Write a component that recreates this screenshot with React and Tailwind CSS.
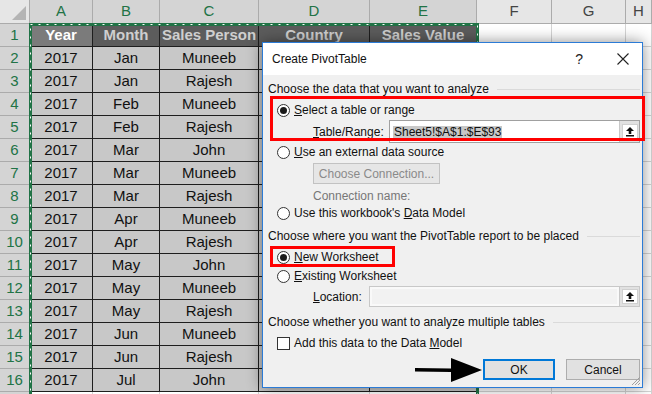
import React from "react";

const data = [
  ["Jan", "Muneeb"], ["Jan", "Rajesh"], ["Feb", "Muneeb"], ["Feb", "Rajesh"],
  ["Mar", "John"], ["Mar", "Muneeb"], ["Mar", "Rajesh"], ["Apr", "Muneeb"],
  ["Apr", "Rajesh"], ["May", "John"], ["May", "Muneeb"], ["May", "Rajesh"],
  ["Jun", "Muneeb"], ["Jun", "Rajesh"], ["Jul", "John"],
];

const colLetters = ["A", "B", "C", "D", "E", "F", "G", "H"];

function RowHead({ n, sel = true }) {
  return (
    <div className={`flex items-center justify-center border-r border-b border-[#ababab] text-[15px] ${sel ? "bg-[#d4d4d4] text-[#217346]" : "bg-[#e6e6e6] text-[#444]"}`}>
      {n}
    </div>
  );
}

function DataCell({ children }) {
  return (
    <div className="flex items-center justify-center bg-[#c8c8c8] border-r border-b border-[#1e1e1e] text-[15px] text-[#111]">
      {children}
    </div>
  );
}

function Blank() {
  return <div className="bg-white border-r border-b border-[#d4d4d4]" />;
}

function Radio({ on }) {
  return (
    <span className="w-[13px] h-[13px] rounded-full border border-[#333] bg-white flex items-center justify-center shrink-0">
      {on && <span className="w-[7px] h-[7px] rounded-full bg-[#1a1a1a]" />}
    </span>
  );
}

function CollapseBtn() {
  return (
    <div className="w-[20px] h-full flex items-center justify-center bg-[#e1e1e1] border-l border-[#c8c8c8]">
      <div className="w-[16px] h-[15px] bg-white border border-[#d0d0d0] flex items-center justify-center">
        <svg width="10" height="11" viewBox="0 0 10 11">
          <path d="M5 1 L9 5 L6.3 5 L6.3 8 L3.7 8 L3.7 5 L1 5 Z" fill="#111" />
          <rect x="1" y="9" width="8" height="1.5" fill="#111" />
        </svg>
      </div>
    </div>
  );
}

function SectionLabel({ children, className = "" }) {
  return (
    <div className={`flex items-center h-[16px] ${className}`}>
      <span className="whitespace-nowrap">{children}</span>
      <div className="flex-1 h-px bg-[#dadada] ml-[8px]" />
    </div>
  );
}

export default function App() {
  return (
    <div className="relative w-[652px] h-[394px] overflow-hidden bg-white" style={{ fontFamily: '"Liberation Sans", Arial, sans-serif' }}>
      {/* Spreadsheet */}
      <div className="grid grid-cols-[30px_63px_67px_99px_111px_107px_75px_74px_26px] grid-rows-[24px_repeat(17,23px)]">
        {/* corner */}
        <div className="relative bg-[#e6e6e6] border-r border-b border-[#ababab]">
          <div className="absolute right-[3px] bottom-[3px] w-0 h-0 border-l-[14px] border-l-transparent border-b-[14px] border-b-[#b4b4b4]" />
        </div>
        {colLetters.map((c, i) => (
          <div
            key={c}
            className={`flex items-center justify-center border-r border-b border-[#ababab] text-[15px] ${i < 5 ? "bg-[#d4d4d4] text-[#217346]" : "bg-[#e6e6e6] text-[#444]"}`}
          >
            {c}
          </div>
        ))}

        {/* Row 1 */}
        <RowHead n={1} />
        <div className="flex items-center justify-center bg-[#7b7b7b] border-r border-b border-[#1e1e1e] text-[15px] font-bold text-white">Year</div>
        <div className="flex items-center justify-center bg-[#5c5c5c] border-r border-b border-[#1e1e1e] text-[15px] font-bold text-[#cfcfcf]">Month</div>
        <div className="flex items-center justify-center bg-[#5c5c5c] border-r border-b border-[#1e1e1e] text-[15px] font-bold text-[#cfcfcf]">Sales Person</div>
        <div className="flex items-center justify-center bg-[#5c5c5c] border-r border-b border-[#1e1e1e] text-[15px] font-bold text-[#cfcfcf]">Country</div>
        <div className="flex items-center justify-center bg-[#5c5c5c] border-r border-b border-[#1e1e1e] text-[15px] font-bold text-[#cfcfcf]">Sales Value</div>
        <Blank />
        <Blank />
        <Blank />

        {data.map(([m, p], i) => (
          <React.Fragment key={i}>
            <RowHead n={i + 2} />
            <DataCell>2017</DataCell>
            <DataCell>{m}</DataCell>
            <DataCell>{p}</DataCell>
            <DataCell />
            <DataCell />
            <Blank />
            <Blank />
            <Blank />
          </React.Fragment>
        ))}
        <div className="bg-[#d4d4d4] border-r border-b border-[#ababab]" />
        <Blank /><Blank /><Blank /><Blank /><Blank /><Blank /><Blank /><Blank />
      </div>

      {/* Selection marching ants */}
      <svg width="452" height="390" className="absolute left-[28px] top-[22px]">
        <rect x="2.5" y="2.5" width="447" height="400" fill="none" stroke="#217346" strokeWidth="3" />
        <rect x="2.5" y="2.5" width="447" height="400" fill="none" stroke="#ffffff" strokeWidth="1" strokeDasharray="2 6" />
      </svg>

      {/* Dialog */}
      <div
        className="absolute left-[262px] top-[42px] w-[381px] h-[346px] border border-[#2b7bd6] bg-[#f0f0f0] shadow-[0_0_14px_rgba(0,0,0,0.45)] text-[12px] text-[#111] flex flex-col"
        style={{ fontFamily: '"Liberation Sans", Arial, sans-serif' }}
      >
        {/* Title bar */}
        <div className="h-[32px] bg-white flex items-center pl-[9px] shrink-0">
          <span className="text-[12px] text-[#111]">Create PivotTable</span>
          <span className="ml-auto mr-[34px] text-[14px] text-[#222]">?</span>
          <svg width="12" height="12" viewBox="0 0 12 12" className="mr-[13px]">
            <path d="M0.5 0.5 L11.5 11.5 M11.5 0.5 L0.5 11.5" stroke="#222" strokeWidth="1.1" />
          </svg>
        </div>

        {/* Body */}
        <div className="flex flex-col pl-[5px] pr-[2px]">
          <SectionLabel className="mt-[6px]">Choose the data that you want to analyze</SectionLabel>

          <div className="flex items-center h-[16px] mt-[5px] pl-[9px] gap-[4px]">
            <Radio on />
            <span><u>S</u>elect a table or range</span>
          </div>

          <div className="flex items-center h-[23px] mt-[2px] pl-[45px]">
            <span className="w-[76px]"><u>T</u>able/Range:</span>
            <div className="flex-1 h-full flex bg-white border border-[#a0a0a0]">
              <div className="flex-1 flex items-center pl-[3px]">
                <span className="bg-[#c8c8c8] px-[1px] leading-[12px] py-[0px]">Sheet5!$A$1:$E$93</span>
              </div>
              <CollapseBtn />
            </div>
          </div>

          <div className="flex items-center h-[16px] mt-[1px] pl-[9px] gap-[4px]">
            <Radio />
            <span><u>U</u>se an external data source</span>
          </div>

          <div className="pl-[45px] mt-[3px]">
            <div className="w-[127px] h-[21px] flex items-center justify-center bg-[#e6e6e6] border border-[#c2c2c2] text-[#8a8a8a]">
              Choose Connection...
            </div>
          </div>

          <div className="flex items-center h-[16px] mt-[4px] pl-[45px] text-[#777]">
            Connection name:
          </div>

          <div className="flex items-center h-[16px] mt-[1px] pl-[9px] gap-[4px]">
            <Radio />
            <span>Use this workbook's <u>D</u>ata Model</span>
          </div>

          <SectionLabel className="mt-[7px]">Choose where you want the PivotTable report to be placed</SectionLabel>

          <div className="flex items-center h-[16px] mt-[5px] pl-[9px] gap-[4px]">
            <Radio on />
            <span><u>N</u>ew Worksheet</span>
          </div>

          <div className="flex items-center h-[16px] mt-[3px] pl-[9px] gap-[4px]">
            <Radio />
            <span><u>E</u>xisting Worksheet</span>
          </div>

          <div className="flex items-center h-[21px] mt-[2px] pl-[45px]">
            <span className="w-[56px]"><u>L</u>ocation:</span>
            <div className="flex-1 h-full flex bg-[#f9f9f9] border border-[#c8c8c8]">
              <div className="flex-1 m-[2px] bg-[#f2f2f2]" />
              <CollapseBtn />
            </div>
          </div>

          <SectionLabel className="mt-[7px]">Choose whether you want to analyze multiple tables</SectionLabel>

          <div className="flex items-center h-[16px] mt-[5px] pl-[9px] gap-[4px]">
            <span className="w-[13px] h-[13px] border border-[#333] bg-white shrink-0" />
            <span>Add this data to the Data <u>M</u>odel</span>
          </div>

          <div className="flex justify-end gap-[11px] mt-[8px]">
            <div className="w-[72px] h-[21px] flex items-center justify-center bg-[#e1e1e1] border-2 border-[#0078d7]">OK</div>
            <div className="w-[74px] h-[21px] flex items-center justify-center bg-[#e1e1e1] border border-[#adadad]">Cancel</div>
          </div>
        </div>

        {/* resize grip */}
        <svg width="10" height="10" viewBox="0 0 10 10" className="absolute right-[1px] bottom-[1px]">
          <path d="M9 1 L1 9 M9 4 L4 9 M9 7 L7 9" stroke="#a0a0a0" strokeWidth="1" />
        </svg>

        {/* Red annotation boxes */}
        <div className="absolute left-[7px] top-[53px] w-[375px] h-[45px] border-[3px] border-[#ff0000]" />
        <div className="absolute left-[7px] top-[203px] w-[125px] h-[21px] border-[3px] border-[#ff0000]" />

        {/* Arrow annotation */}
        <svg width="68" height="26" viewBox="0 0 68 26" className="absolute left-[152px] top-[314px]">
          <path d="M0 11 L36 11.5 L36 1 L67 13 L36 25 L36 15 L0 14.5 Z" fill="#000" />
        </svg>
      </div>
    </div>
  );
}
